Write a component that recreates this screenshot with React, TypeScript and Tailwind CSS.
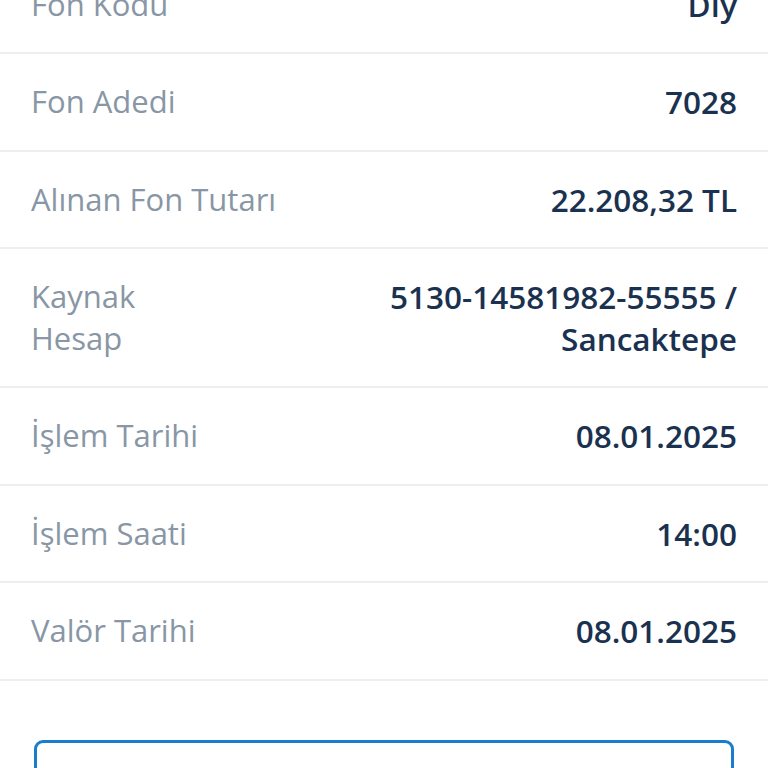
const rows: { label: string; value: string }[] = [
  { label: "Fon Kodu", value: "DIy" },
  { label: "Fon Adedi", value: "7028" },
  { label: "Alınan Fon Tutarı", value: "22.208,32 TL" },
  { label: "Kaynak Hesap", value: "5130-14581982-55555 / Sancaktepe" },
  { label: "İşlem Tarihi", value: "08.01.2025" },
  { label: "İşlem Saati", value: "14:00" },
  { label: "Valör Tarihi", value: "08.01.2025" },
];

function Row({ label, value }: { label: string; value: string }) {
  return (
    <div className="flex justify-between gap-[12px] px-[31px] py-[27px] border-b-2 border-[#eceff2]">
      <span className="text-[#8896a5] text-[31px] leading-[41.5px]">{label}</span>
      <span className="text-[#1a3250] text-[31.5px] leading-[41.5px] font-semibold text-right">{value}</span>
    </div>
  );
}

export default function App() {
  return (
    <div
      className="w-[768px] h-[768px] overflow-hidden bg-white"
      style={{ fontFamily: '"Open Sans", "Noto Sans", sans-serif' }}
    >
      <div className="mt-[-43.5px]">
        {rows.map((r) => (
          <Row key={r.label} label={r.label} value={r.value} />
        ))}
      </div>
      <div className="px-[34px] pt-[59px]">
        <div className="h-[90px] rounded-[9px] border-[3px] border-[#1a7ccc]" />
      </div>
    </div>
  );
}
